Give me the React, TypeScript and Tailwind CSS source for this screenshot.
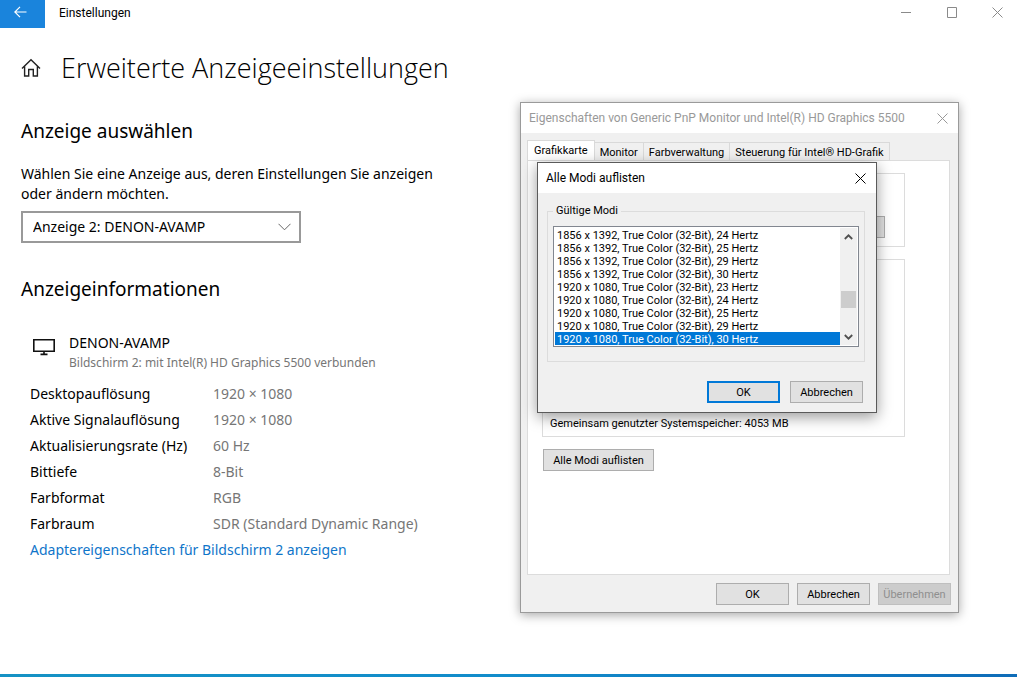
import { useState } from 'react';
import type { ButtonHTMLAttributes } from 'react';

const displayInfo = [
  { label: 'Desktopauflösung', value: '1920 × 1080' },
  { label: 'Aktive Signalauflösung', value: '1920 × 1080' },
  { label: 'Aktualisierungsrate (Hz)', value: '60 Hz' },
  { label: 'Bittiefe', value: '8-Bit' },
  { label: 'Farbformat', value: 'RGB' },
  { label: 'Farbraum', value: 'SDR (Standard Dynamic Range)' },
];

const modes = [
  '1856 x 1392, True Color (32-Bit), 24 Hertz',
  '1856 x 1392, True Color (32-Bit), 25 Hertz',
  '1856 x 1392, True Color (32-Bit), 29 Hertz',
  '1856 x 1392, True Color (32-Bit), 30 Hertz',
  '1920 x 1080, True Color (32-Bit), 23 Hertz',
  '1920 x 1080, True Color (32-Bit), 24 Hertz',
  '1920 x 1080, True Color (32-Bit), 25 Hertz',
  '1920 x 1080, True Color (32-Bit), 29 Hertz',
  '1920 x 1080, True Color (32-Bit), 30 Hertz',
];

const tabs = ['Grafikkarte', 'Monitor', 'Farbverwaltung', 'Steuerung für Intel® HD-Grafik'];

const CloseIcon = () => (
  <svg width="11" height="11" viewBox="0 0 11 11" fill="none" stroke="currentColor" aria-hidden="true">
    <path d="M0.5 0.5L10.5 10.5M10.5 0.5L0.5 10.5" />
  </svg>
);

const DialogButton = ({ className = '', ...props }: ButtonHTMLAttributes<HTMLButtonElement>) => (
  <button
    type="button"
    className={`flex h-[22px] items-center justify-center pt-0.5 ${className}`}
    {...props}
  />
);

const TitleBar = () => (
  <header className="flex h-7 items-start">
    <button type="button" aria-label="Zurück" className="flex h-7 w-[45px] justify-center bg-[#1a84dc] pt-1.5 pr-1 text-white">
      <svg width="13" height="12" viewBox="0 0 13 12" fill="none" stroke="currentColor" strokeWidth="1.2" aria-hidden="true">
        <path d="M12.5 6H1M6 0.8L0.8 6L6 11.2" />
      </svg>
    </button>
    <span className="pl-3.5 font-['Roboto','Open_Sans',sans-serif] text-xs leading-[26px]">Einstellungen</span>
    <div className="ml-auto flex h-6 items-center text-[#8a8a8a]">
      <button type="button" aria-label="Minimieren" className="flex w-[46px] justify-center">
        <svg width="11" height="11" viewBox="0 0 11 11" stroke="currentColor" aria-hidden="true">
          <path d="M0 5.5H10" />
        </svg>
      </button>
      <button type="button" aria-label="Maximieren" className="flex w-[46px] justify-center">
        <svg width="11" height="11" viewBox="0 0 11 11" fill="none" stroke="currentColor" aria-hidden="true">
          <path d="M0.5 0.5H9.5V10.5H0.5Z" />
        </svg>
      </button>
      <button type="button" aria-label="Schließen" className="flex w-[42px] justify-center pl-[3px]">
        <CloseIcon />
      </button>
    </div>
  </header>
);

const SettingsPage = () => (
  <main className="max-w-[520px] px-[21px] pt-5 font-['Noto_Sans','Open_Sans',sans-serif] text-sm">
    <div className="flex h-10 items-center gap-5">
      <svg width="20" height="20" viewBox="0 0 20 20" fill="none" stroke="#222" strokeWidth="1.4" aria-hidden="true">
        <path d="M1 10.5L10 1.7L19 10.5M3.6 8.5V18H7.7V11.5H12.3V18H16.4V8.5" />
      </svg>
      <h1 className="font-['Open_Sans','Noto_Sans',sans-serif] text-[27px] font-light leading-9 whitespace-nowrap">
        Erweiterte Anzeigeeinstellungen
      </h1>
    </div>

    <h2 className="mt-[27px] text-[19px] leading-8">Anzeige auswählen</h2>
    <label htmlFor="display" className="mt-[17px] block max-w-[430px] leading-5">
      Wählen Sie eine Anzeige aus, deren Einstellungen Sie anzeigen oder ändern möchten.
    </label>
    <div className="mt-[7px] grid max-w-[280px] items-center">
      <select
        id="display"
        className="col-start-1 row-start-1 h-8 w-full appearance-none border-2 border-[#999] bg-white px-2.5 text-sm"
      >
        <option>Anzeige 2: DENON-AVAMP</option>
      </select>
      <svg
        className="pointer-events-none col-start-1 row-start-1 mr-2.5 justify-self-end"
        width="13" height="8" viewBox="0 0 13 8" fill="none" stroke="#666" aria-hidden="true"
      >
        <path d="M0.5 0.8L6.5 6.8L12.5 0.8" />
      </svg>
    </div>

    <h2 className="mt-[30px] text-[19px] leading-8">Anzeigeinformationen</h2>
    <div className="mt-7 flex gap-3.5 pl-3">
      <svg className="mt-[5px]" width="22" height="18" viewBox="0 0 22 18" fill="none" stroke="#111" strokeWidth="1.6" aria-hidden="true">
        <path d="M0.8 1.8H21.2V13.2H0.8ZM11 13V16.2M7.5 16.4H14.5" />
      </svg>
      <div>
        <p className="leading-5">DENON-AVAMP</p>
        <p className="text-xs leading-5 text-[#767676]">Bildschirm 2: mit Intel(R) HD Graphics 5500 verbunden</p>
      </div>
    </div>
    <dl className="mt-2 grid grid-cols-[183px_1fr] pl-[9px] leading-[26px]">
      {displayInfo.map(({ label, value }) => (
        <div key={label} className="col-span-2 grid grid-cols-subgrid">
          <dt>{label}</dt>
          <dd className="text-[#767676]">{value}</dd>
        </div>
      ))}
    </dl>
    <a href="#adapter" className="ml-[9px] leading-[26px] text-[#0f75c9]">
      Adaptereigenschaften für Bildschirm 2 anzeigen
    </a>
  </main>
);

const PropertiesDialog = () => {
  const [activeTab, setActiveTab] = useState(tabs[0]);

  return (
    <section
      role="dialog"
      aria-labelledby="properties-title"
      className="absolute top-[102px] left-[520px] flex w-[439px] flex-col border border-[#9a9a9a] bg-[#f0f0f0] font-['Roboto','Open_Sans',sans-serif] text-[11px] shadow-[0_2px_10px_rgba(0,0,0,0.35)]"
    >
      <div className="flex h-[30px] items-center justify-between bg-white pr-2.5 pl-2 text-[#999]">
        <h2 id="properties-title" className="text-xs">Eigenschaften von Generic PnP Monitor und Intel(R) HD Graphics 5500</h2>
        <button type="button" aria-label="Schließen">
          <CloseIcon />
        </button>
      </div>

      <div role="tablist" className="flex h-[27px] items-end pl-1.5">
        {tabs.map((tab) => (
          <button
            key={tab}
            type="button"
            role="tab"
            aria-selected={tab === activeTab}
            onClick={() => setActiveTab(tab)}
            className="h-[18px] border-t border-r border-[#d9d9d9] px-[5px] leading-5 whitespace-nowrap aria-selected:h-5 aria-selected:border-l aria-selected:bg-white aria-selected:px-1.5 aria-selected:leading-[18px]"
          >
            {tab}
          </button>
        ))}
      </div>

      <div role="tabpanel" className="mr-2 ml-1.5 flex h-[415px] flex-col border border-[#dcdcdc] bg-white pt-3 pr-11 pl-3.5">
        <div className="flex h-[74px] items-end justify-end border border-[#dcdcdc] pr-[19px] pb-2">
          <DialogButton className="w-[111px] border border-[#adadad] bg-[#e1e1e1]">Eigenschaften</DialogButton>
        </div>
        <div className="mt-3 flex h-[178px] items-end gap-[3px] border border-[#dcdcdc] px-[7px] pb-[3px] leading-[18px]">
          <span className="whitespace-nowrap">Gemeinsam genutzter Systemspeicher:</span>
          <span>4053 MB</span>
        </div>
        <DialogButton className="mt-3 ml-px w-[111px] border border-[#adadad] bg-[#e1e1e1]">Alle Modi auflisten</DialogButton>
      </div>

      <div className="flex justify-end gap-2 pt-2 pr-[7px] pb-[7px]">
        <DialogButton className="w-[73px] border border-[#adadad] bg-[#e1e1e1]">OK</DialogButton>
        <DialogButton className="w-[73px] border border-[#adadad] bg-[#e1e1e1]">Abbrechen</DialogButton>
        <DialogButton disabled className="w-[73px] border border-[#bfbfbf] bg-[#cccccc] text-[#8f8f8f]">
          Übernehmen
        </DialogButton>
      </div>
    </section>
  );
};

const ModesDialog = () => {
  const [mode, setMode] = useState(modes[8]);

  return (
    <section
      role="dialog"
      aria-labelledby="modes-title"
      className="absolute top-[162px] left-[537px] flex w-[340px] flex-col border border-[#5a5a5a] bg-[#f0f0f0] font-['Roboto','Open_Sans',sans-serif] text-[11px] shadow-[0_4px_14px_rgba(0,0,0,0.4)]"
    >
      <div className="flex h-[30px] items-center justify-between bg-white pr-2.5 pl-2">
        <h2 id="modes-title" className="text-xs">Alle Modi auflisten</h2>
        <button type="button" aria-label="Schließen">
          <CloseIcon />
        </button>
      </div>

      <fieldset className="mt-2.5 mr-[11px] ml-[9px] border border-[#dcdcdc] px-[5px] pt-[7px] pb-3.5">
        <legend className="px-[3px] leading-4">
          <label htmlFor="modes">Gültige Modi</label>
        </legend>
        <div className="flex h-[121px] border border-[#828790] bg-white p-px">
          <select
            id="modes"
            size={9}
            value={mode}
            onChange={(e) => setMode(e.target.value)}
            className="h-[117px] flex-1 appearance-none overflow-hidden outline-none"
          >
            {modes.map((item) => (
              <option
                key={item}
                value={item}
                className="h-[13px] min-h-0 px-0.5 pt-px pb-0 leading-[12px] checked:bg-[linear-gradient(#0078d7,#0078d7)] checked:text-white"
              >
                {item}
              </option>
            ))}
          </select>
          <div className="flex w-[17px] flex-col items-center bg-[#f0f0f0] pt-1.5 pb-[5px] text-[#505050]">
            <svg width="9" height="6" viewBox="0 0 9 6" fill="none" stroke="currentColor" strokeWidth="1.8" aria-hidden="true">
              <path d="M0.8 5L4.5 1.3L8.2 5" />
            </svg>
            <div className="mt-[51px] h-[17px] w-[15px] bg-[#cdcdcd]" />
            <svg className="mt-auto" width="9" height="6" viewBox="0 0 9 6" fill="none" stroke="currentColor" strokeWidth="1.8" aria-hidden="true">
              <path d="M0.8 1L4.5 4.7L8.2 1" />
            </svg>
          </div>
        </div>
      </fieldset>

      <div className="flex justify-end gap-2.5 pt-[19px] pr-[13px] pb-[9px]">
        <DialogButton className="w-[73px] border-2 border-[#0078d7] bg-[#e1e1e1]">OK</DialogButton>
        <DialogButton className="w-[73px] border border-[#adadad] bg-[#e1e1e1]">Abbrechen</DialogButton>
      </div>
    </section>
  );
};

const App = () => (
  <div className="relative flex min-h-screen flex-col overflow-hidden bg-white text-black">
    <TitleBar />
    <SettingsPage />
    <PropertiesDialog />
    <ModesDialog />
    <div className="mt-auto h-[3px] bg-linear-to-r from-[#1592c4] via-[#128ccb] to-[#0f6cb8]" />
  </div>
);

export default App;
